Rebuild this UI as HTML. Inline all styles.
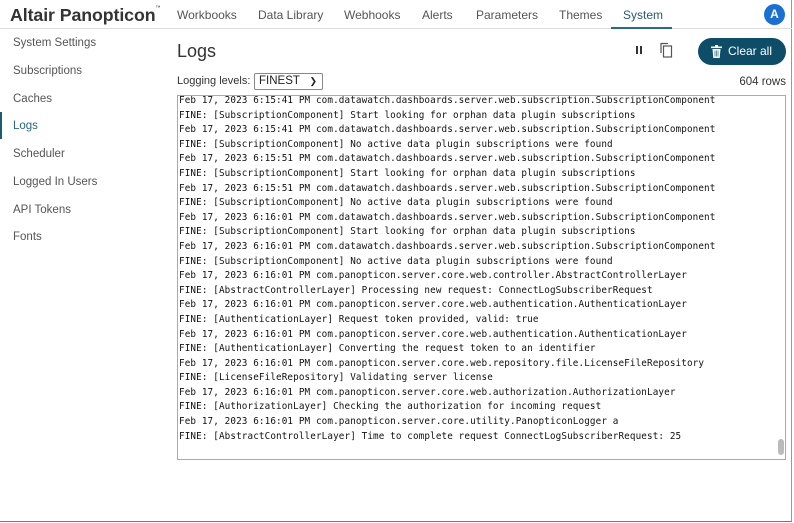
<!DOCTYPE html>
<html><head><meta charset="utf-8"><style>
*{margin:0;padding:0;box-sizing:border-box}
body{width:794px;height:523px;background:#fff;font-family:"Liberation Sans",sans-serif;position:relative;overflow:hidden;color:#333}
.frame{position:absolute;left:0;top:0;width:792px;height:522px;border-right:1px solid #999;border-bottom:1px solid #777}
.hdr{position:absolute;left:0;top:0;width:792px;height:29px;border-bottom:1px solid #ddd}
.logo{position:absolute;left:10px;top:5px;font-size:17.8px;font-weight:bold;color:#333;letter-spacing:-0.1px}
.logo sup{font-size:5px;font-weight:normal;vertical-align:top}
.nav{position:absolute;top:8px;font-size:12px;color:#555}
.sys{color:#2a5a70}
.ul{position:absolute;left:611px;top:27px;width:61px;height:2px;background:#2a6a85}
.av{position:absolute;left:764px;top:4px;width:21px;height:21px;border-radius:50%;background:#1a6fd0;color:#fff;font-size:12px;font-weight:bold;text-align:center;line-height:21px}
.side{position:absolute;left:13px;font-size:11.5px;color:#555}
.ind{position:absolute;left:0;top:112px;width:2px;height:27px;background:#1e5a72}
h1{position:absolute;left:177px;top:41px;font-size:18px;font-weight:normal;color:#333}
.ll{position:absolute;left:177px;top:75px;font-size:11px;color:#333}
.sel{position:absolute;left:254px;top:73px;width:69px;height:17px;border:1px solid #888;border-radius:2px;font-size:11.5px;padding-left:4px;line-height:15px;color:#222}
.sel span{position:absolute;right:5px;top:0;font-size:9px}
.rows{position:absolute;right:8px;top:76px;font-size:11.5px;color:#333}
.btn{position:absolute;left:698px;top:38px;width:88px;height:27px;border-radius:14px;background:#0e4d68;color:#fff;font-size:12px;line-height:27px;padding-left:30px}
.ta{position:absolute;left:177px;top:95px;width:609px;height:365px;border:1px solid #aaa;overflow:hidden}
.ta pre{font-family:"DejaVu Sans Mono","Liberation Mono",monospace;font-size:9.3px;letter-spacing:0.11px;line-height:14.6px;color:#111;margin-left:1px;margin-top:-2px}
.sb{position:absolute;right:1px;top:343px;width:6px;height:16px;background:#bbb;border-radius:3px}
</style></head><body>
<div class="frame"></div>
<div class="hdr">
<div class="logo">Altair Panopticon<sup>™</sup></div>
<div class="nav" style="left:177px">Workbooks</div>
<div class="nav" style="left:258px">Data Library</div>
<div class="nav" style="left:344px">Webhooks</div>
<div class="nav" style="left:422px">Alerts</div>
<div class="nav" style="left:476px">Parameters</div>
<div class="nav" style="left:559px">Themes</div>
<div class="nav sys" style="left:623px">System</div>
<div class="ul"></div>
<div class="av">A</div>
</div>
<div class="side" style="top:37px">System Settings</div>
<div class="side" style="top:65px">Subscriptions</div>
<div class="side" style="top:93px">Caches</div>
<div class="ind"></div>
<div class="side" style="top:120px;color:#2a6a85">Logs</div>
<div class="side" style="top:148px">Scheduler</div>
<div class="side" style="top:176px">Logged In Users</div>
<div class="side" style="top:204px">API Tokens</div>
<div class="side" style="top:231px">Fonts</div>
<h1>Logs</h1>
<svg style="position:absolute;left:634px;top:45px" width="10" height="10"><rect x="2" y="1" width="2" height="8" fill="#333"/><rect x="6" y="1" width="2" height="8" fill="#333"/></svg>
<svg style="position:absolute;left:659px;top:42px" width="16" height="16" fill="none" stroke="#555" stroke-width="1.2"><path d="M2 11V1.5h7"/><rect x="4.5" y="4" width="8" height="11"/></svg>
<div class="btn"><svg style="position:absolute;left:13px;top:7px" width="11" height="13" fill="#fff"><rect x="0" y="1.5" width="11" height="1.6"/><rect x="4" y="0" width="3" height="2"/><path d="M1.5 4h8l-.8 9h-6.4z"/><path d="M4 5.5v6M5.5 5.5v6M7 5.5v6" stroke="#0e4d68" stroke-width=".6"/></svg>Clear all</div>
<div class="ll">Logging levels:</div>
<div class="sel">FINEST<span>&#10095;</span></div>
<div class="rows">604 rows</div>
<div class="ta"><pre>Feb 17, 2023 6:15:41 PM com.datawatch.dashboards.server.web.subscription.SubscriptionComponent
FINE: [SubscriptionComponent] Start looking for orphan data plugin subscriptions
Feb 17, 2023 6:15:41 PM com.datawatch.dashboards.server.web.subscription.SubscriptionComponent
FINE: [SubscriptionComponent] No active data plugin subscriptions were found
Feb 17, 2023 6:15:51 PM com.datawatch.dashboards.server.web.subscription.SubscriptionComponent
FINE: [SubscriptionComponent] Start looking for orphan data plugin subscriptions
Feb 17, 2023 6:15:51 PM com.datawatch.dashboards.server.web.subscription.SubscriptionComponent
FINE: [SubscriptionComponent] No active data plugin subscriptions were found
Feb 17, 2023 6:16:01 PM com.datawatch.dashboards.server.web.subscription.SubscriptionComponent
FINE: [SubscriptionComponent] Start looking for orphan data plugin subscriptions
Feb 17, 2023 6:16:01 PM com.datawatch.dashboards.server.web.subscription.SubscriptionComponent
FINE: [SubscriptionComponent] No active data plugin subscriptions were found
Feb 17, 2023 6:16:01 PM com.panopticon.server.core.web.controller.AbstractControllerLayer
FINE: [AbstractControllerLayer] Processing new request: ConnectLogSubscriberRequest
Feb 17, 2023 6:16:01 PM com.panopticon.server.core.web.authentication.AuthenticationLayer
FINE: [AuthenticationLayer] Request token provided, valid: true
Feb 17, 2023 6:16:01 PM com.panopticon.server.core.web.authentication.AuthenticationLayer
FINE: [AuthenticationLayer] Converting the request token to an identifier
Feb 17, 2023 6:16:01 PM com.panopticon.server.core.web.repository.file.LicenseFileRepository
FINE: [LicenseFileRepository] Validating server license
Feb 17, 2023 6:16:01 PM com.panopticon.server.core.web.authorization.AuthorizationLayer
FINE: [AuthorizationLayer] Checking the authorization for incoming request
Feb 17, 2023 6:16:01 PM com.panopticon.server.core.utility.PanopticonLogger a
FINE: [AbstractControllerLayer] Time to complete request ConnectLogSubscriberRequest: 25</pre><div class="sb"></div></div>
</body></html>
